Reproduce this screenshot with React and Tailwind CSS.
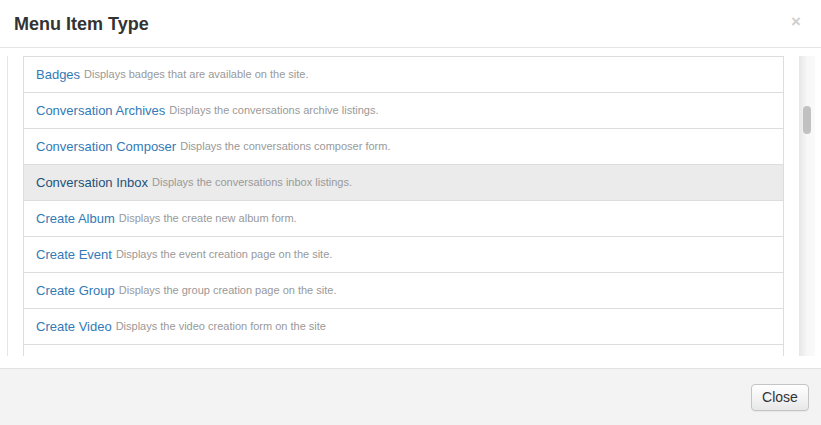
import React from 'react';

const items = [
  { title: 'Badges', desc: 'Displays badges that are available on the site.' },
  { title: 'Conversation Archives', desc: 'Displays the conversations archive listings.' },
  { title: 'Conversation Composer', desc: 'Displays the conversations composer form.' },
  { title: 'Conversation Inbox', desc: 'Displays the conversations inbox listings.', active: true },
  { title: 'Create Album', desc: 'Displays the create new album form.' },
  { title: 'Create Event', desc: 'Displays the event creation page on the site.' },
  { title: 'Create Group', desc: 'Displays the group creation page on the site.' },
  { title: 'Create Video', desc: 'Displays the video creation form on the site' },
];

const MenuRow = ({ title, desc, active }) => (
  <div
    className={`h-9 flex items-center px-3 border-b border-[#dddddd] ${
      active ? 'bg-[#ebebeb]' : 'bg-white'
    }`}
  >
    <span className={`text-[13px] ${active ? 'text-[#23527c]' : 'text-[#337ab7]'}`}>{title}</span>
    <span className="ml-1 text-[11px] text-[#999999]">{desc}</span>
  </div>
);

export default function App() {
  return (
    <div className="w-[821px] h-[425px] bg-white flex flex-col font-['Liberation_Sans',Arial,sans-serif] overflow-hidden">
      {/* header */}
      <div className="h-12 shrink-0 flex items-center justify-between pl-[14px] pr-[20px] border-b border-[#e5e5e5]">
        <h3 className="text-[18px] font-bold text-[#333333] leading-none">Menu Item Type</h3>
        <button className="text-[17px] font-bold text-[#cfcfcf] leading-none -mt-[5px]">×</button>
      </div>

      {/* body */}
      <div className="h-[320px] shrink-0 pt-2 pl-[7px] pr-[6px]">
        <div className="h-[300px] flex border-l border-[#e5e5e5]">
          <div className="flex-1 pl-[15px] pr-[15px] overflow-hidden">
            <div className="border border-b-0 border-[#dddddd]">
              {items.map((it) => (
                <MenuRow key={it.title} {...it} />
              ))}
              {/* next row, scrolled out of view */}
              <div className="h-9 bg-white border-b border-[#dddddd]" />
            </div>
          </div>
          {/* scrollbar */}
          <div className="w-4 h-full bg-gradient-to-r from-[#e6e6e6] via-[#f7f7f7] to-[#fafafa] pt-[50px] flex justify-center">
            <div className="w-2 h-7 rounded-full bg-[#c1c1c1]" />
          </div>
        </div>
      </div>

      {/* footer */}
      <div className="flex-1 bg-[#f3f3f3] border-t border-[#e2e2e2] flex items-center justify-end pr-3">
        <button className="h-[27px] w-[58px] rounded border border-[#c4c4c4] bg-gradient-to-b from-white to-[#e8e8e8] text-[14px] text-[#333333] shadow-[0_1px_1px_rgba(0,0,0,0.05)]">
          Close
        </button>
      </div>
    </div>
  );
}
